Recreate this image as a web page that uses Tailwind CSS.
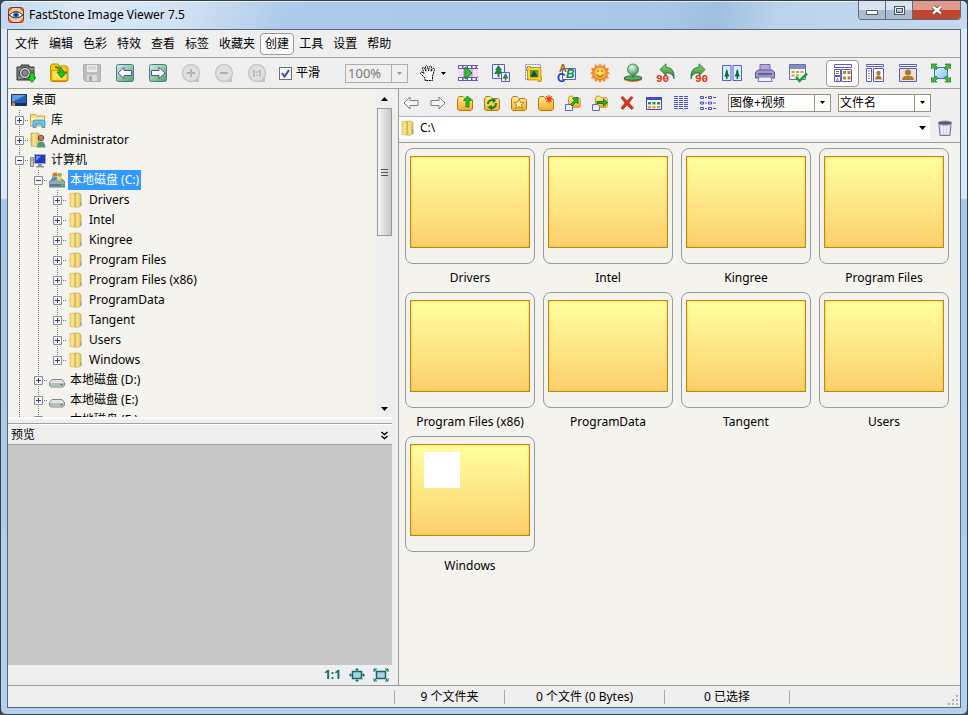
<!DOCTYPE html>
<html lang="zh-CN">
<head>
  <meta charset="UTF-8" />
  <meta name="viewport" content="width=device-width, initial-scale=1.0"/>
  <title>FastStone Image Viewer 7.5</title>

  <!-- Tailwind CSS -->
  <script src="https://cdn.jsdelivr.net/npm/@tailwindcss/browser@4"></script>

  <style>
    body {
      font-family: 'Noto Sans', 'Noto Sans CJK SC', sans-serif;
    }
    .glass {
      background: linear-gradient(to bottom, #c9dcf0 0, #dfeaf6 28px, #dce8f5 197px, #a9c7e6 199px, #b4d0ec 100%);
    }
    .title-glass {
      background: linear-gradient(100deg, #bfd7ef 0, #dbe8f6 8%, #d3e3f4 18%, #adcaea 30%, #a9c8e8 68%, #9fbfe0 74%, #bad2eb 80%, #c6daef 100%);
    }
  </style>
</head>

<body class="h-screen overflow-hidden bg-[#3a4654] text-xs text-black">

  <!-- Gradients (must stay rendered, a hidden svg would drop the fills) -->
  <svg class="absolute size-0" xmlns="http://www.w3.org/2000/svg">
    <defs>
      <linearGradient id="gFolder" x1="0" y1="0" x2="0" y2="1"><stop offset="0" stop-color="#fff0a0"/><stop offset="1" stop-color="#f5a81c"/></linearGradient>
      <linearGradient id="gTree" x1="0" y1="0" x2="1" y2="0"><stop offset="0" stop-color="#dcb950"/><stop offset=".35" stop-color="#f8e79a"/><stop offset="1" stop-color="#dcb950"/></linearGradient>
      <linearGradient id="gGreen" x1="0" y1="0" x2="1" y2="1"><stop offset="0" stop-color="#d8f0dc"/><stop offset="1" stop-color="#4da458"/></linearGradient>
      <linearGradient id="gBlue" x1="0" y1="0" x2="1" y2="1"><stop offset="0" stop-color="#e4f6ff"/><stop offset="1" stop-color="#7fc4ee"/></linearGradient>
      <linearGradient id="gTurn" x1="0" y1="0" x2="0" y2="1"><stop offset="0" stop-color="#8fe05a"/><stop offset="1" stop-color="#1d7d3a"/></linearGradient>
      <radialGradient id="gBall" cx=".4" cy=".3" r=".7"><stop offset="0" stop-color="#e8ffe8"/><stop offset="1" stop-color="#3f9a55"/></radialGradient>
      <radialGradient id="gSun" cx=".5" cy=".4" r=".6"><stop offset="0" stop-color="#fff27a"/><stop offset="1" stop-color="#f7a51e"/></radialGradient>
    </defs>
  </svg>

  <!-- Icons -->
  <svg class="hidden" xmlns="http://www.w3.org/2000/svg">
    <symbol id="app" viewBox="0 0 16 16">
      <rect x=".5" y=".5" width="15" height="15" rx="3" fill="#e8703c" stroke="#8e2d16"/>
      <path d="M1 5 5 1h6l4 4v6l-4 4H5l-4-4z" fill="#f3c9a0"/>
      <path d="M1 8q7-7 14 0-7 6-14 0z" fill="#fff" stroke="#3d2a20"/>
      <circle cx="8" cy="8" r="3" fill="#2b78d0"/><circle cx="8" cy="8" r="1.3" fill="#081b3a"/>
    </symbol>

    <!-- Main toolbar -->
    <symbol id="camera" viewBox="0 0 20 20">
      <path d="M1 4h4V2h8v2h5v13H1z" fill="#777" stroke="#333"/>
      <path d="M2 6h16M2 15h16" stroke="#aaa"/>
      <circle cx="9" cy="10" r="5.5" fill="#ddd" stroke="#333"/><circle cx="9" cy="10" r="3.2" fill="#8a8a92" stroke="#444"/>
      <path d="M14 10h4v4.500h2L16 19.500l-4-5h2z" fill="#1fd81f" stroke="#0a7a0a" stroke-width=".8"/>
    </symbol>
    <symbol id="open" viewBox="0 0 20 20">
      <path d="M1.500 2.500 3 1h6l2 2h6.500L19 5v12l-1.500 1.500h-15l-1-1z" fill="#ffc913" stroke="#c48a00"/>
      <path d="M2.500 7.500h12v3H18v7H3z" fill="#ffe04a" stroke="#d99b00"/>
      <path d="M6 4q8-1 8 5h4l-5.500 6L8 9h3q0-3-5-5z" fill="#22c022" stroke="#0b700b" stroke-width=".8"/>
    </symbol>
    <symbol id="save" viewBox="0 0 20 20">
      <path d="M1.500 1.500h17v17h-15l-2-2z" fill="#bdbdbd" stroke="#b0b0b0"/>
      <path d="M5 2h10v7H5z" fill="#ececec"/><path d="M6 4h8M6 6h8" stroke="#c4c4c4"/>
      <path d="M5 12h10v6H5z" fill="#dcdcdc"/><path d="M7 13h3v5H7z" fill="#aaa"/>
    </symbol>
    <symbol id="prev" viewBox="0 0 20 20">
      <rect x="1.500" y="1.500" width="17" height="17" rx="2" fill="url(#gGreen)" stroke="#4f74a0"/>
      <path d="M3 10 9 4.500v3h7.500v5H9v3z" fill="#fff" stroke="#4a4ac8"/>
    </symbol>
    <symbol id="next" viewBox="0 0 20 20">
      <rect x="1.500" y="1.500" width="17" height="17" rx="2" fill="url(#gGreen)" stroke="#4f74a0"/>
      <path d="M17 10 11 4.500v3H3.500v5H11v3z" fill="#fff" stroke="#4a4ac8"/>
    </symbol>
    <symbol id="zoomin" viewBox="0 0 20 20">
      <path d="M17 12v6h-6z" fill="#cfcfcf" stroke="#c4c4c4" stroke-width="2"/><circle cx="10" cy="10" r="8.500" fill="#e0e0e0" stroke="#c6c6c6" stroke-width="1.500"/>
      <path d="M6 10h8M10 6v8" stroke="#b2b2b2" stroke-width="2"/>
    </symbol>
    <symbol id="zoomout" viewBox="0 0 20 20">
      <path d="M17 12v6h-6z" fill="#cfcfcf" stroke="#c4c4c4" stroke-width="2"/><circle cx="10" cy="10" r="8.500" fill="#e0e0e0" stroke="#c6c6c6" stroke-width="1.500"/>
      <path d="M6 10h8" stroke="#b2b2b2" stroke-width="2"/>
    </symbol>
    <symbol id="actual" viewBox="0 0 20 20">
      <path d="M17 12v6h-6z" fill="#cfcfcf" stroke="#c4c4c4" stroke-width="2"/><circle cx="10" cy="10" r="8.500" fill="#e0e0e0" stroke="#c6c6c6" stroke-width="1.500"/>
      <path d="M7 7v7M13 7v7M5.500 8H7M11.500 8H13M10 8.500V10M10 11.500V13" stroke="#b2b2b2" stroke-width="1.500"/>
    </symbol>
    <symbol id="hand" viewBox="0 0 18 18">
      <path d="M6 16.500V14L1.500 9.500q0-1.500 1.500-1.500l2 1.500L3.500 4q.5-1.500 2 0L7 7.500 6.500 2.500q1-1.500 2 0L9.500 7l1-4.500q1-1 2 0L12 7.500l2-3q1.500-.5 1.500 1L13.500 12v4.500z" fill="#fff" stroke="#000" stroke-linejoin="round" stroke-dasharray="2 .6"/>
    </symbol>
    <symbol id="film" viewBox="0 0 20 20">
      <path d="M0 2h20v16H0z" fill="#5a5ab8"/><path d="M0 6h20v8H0z" fill="#d5a8ee"/><path d="M0 6h5v8H0zM15 6h5v8h-5z" fill="#f7dcf8"/>
      <path d="M1 4h19M1 16h19" stroke="#fff" stroke-width="2" stroke-dasharray="3 1.500"/>
      <path d="M7 4v12l7-6z" fill="#2fce2f" stroke="#0b7c1a"/>
    </symbol>
    <symbol id="resize" viewBox="0 0 20 20">
      <path d="M1.500 1.500h12v14h-12z" fill="#e8f4ff" stroke="#5a5ad0"/>
      <path d="M7.500 2 11 7H9.500l2.500 4H3l2.500-4H4z" fill="#1c8a3c"/><path d="M7.500 11v3" stroke="#8a5a20" stroke-width="2"/>
      <path d="M10.500 9.500h8v9h-8z" fill="#e8f4ff" stroke="#5a5ad0"/><path d="m14.500 10 3 5.500h-6z" fill="#1c8a3c"/><path d="M14.500 15v2.500" stroke="#8a5a20" stroke-width="1.500"/>
    </symbol>
    <symbol id="crop" viewBox="0 0 20 20">
      <path d="M1.500 1.500h15v15h-15z" fill="#e8f4ff" stroke="#8080d8" stroke-dasharray="2 1"/>
      <path d="M6 7h8v7H6z" fill="#4aa878"/><path d="m10 7 4 7H6z" fill="#0d5a28"/>
      <path d="M5 3v12.500h13M2 6h13.500v13" fill="none" stroke="#a87600" stroke-width="3.500"/><path d="M5 3.500v12h12.500M2.500 6h13v12.500" fill="none" stroke="#ffd92a" stroke-width="2"/>
    </symbol>
    <symbol id="abc" viewBox="0 0 20 20">
      <path d="M5.500 5.500h13v11h-13z" fill="#eaf2ff" stroke="#5a5ad0"/>
      <text x="2" y="9" font-family="Liberation Sans" font-size="11" font-weight="bold" fill="#a06a10">A</text>
      <text x="0" y="19" font-family="Liberation Sans" font-size="12" font-weight="bold" fill="#1f3fd8">C</text>
      <text x="9" y="15" font-family="Liberation Sans" font-size="12" font-weight="bold" font-style="italic" fill="#168a2c">B</text>
    </symbol>
    <symbol id="sun" viewBox="0 0 20 20">
      <path d="m10 0 2 3.500L15 1l.5 4L19 5l-1.500 3.500L20 10l-2.500 2L19 15.500h-3.500L15 19l-3-2-2 3-2-3-3 2-.5-3.500H1L2.500 12 0 10l2.500-1.500L1 5l3.500 0L5 1l3 2.500z" fill="#f58a3a"/>
      <circle cx="10" cy="10" r="6.200" fill="url(#gSun)" stroke="#e28412" stroke-width=".8"/>
      <path d="M8 7v2M12 7v2M6.500 11.500q3.500 4 7 0" fill="none" stroke="#8a4a08"/>
    </symbol>
    <symbol id="stamp" viewBox="0 0 20 20">
      <path d="M1 15h18v2q-9 4-18 0z" fill="#e06a1a"/><ellipse cx="10" cy="15" rx="9" ry="2.200" fill="#54b06a" stroke="#1e6c34"/>
      <path d="M9 10h2v5H9z" fill="#3f7f50"/><circle cx="10" cy="6.500" r="5.500" fill="url(#gBall)" stroke="#4d8d5c"/>
    </symbol>
    <symbol id="rotl" viewBox="0 0 20 20">
      <path d="M4 6.500 10 .8v3.500q9 0 8 11.500-1-6-8-6v3z" fill="url(#gTurn)" stroke="#1e6b50" stroke-width=".8"/>
      <text x="0" y="19" font-family="Liberation Mono" font-size="11" font-weight="bold" fill="#e03010">90</text>
    </symbol>
    <symbol id="rotr" viewBox="0 0 20 20">
      <path d="M16 6.500 10 .8v3.500q-9 0-8 11.500 1-6 8-6v3z" fill="url(#gTurn)" stroke="#1e6b50" stroke-width=".8"/>
      <text x="6" y="19" font-family="Liberation Mono" font-size="11" font-weight="bold" fill="#e03010">90</text>
    </symbol>
    <symbol id="compare" viewBox="0 0 20 20">
      <path d="M.5 2.500h8.500v15H.5zM11 2.500h8.500v15H11z" fill="#d4f0fb" stroke="#5a5ad0"/>
      <path d="m4.800 6 1.500 3.500h-.6l1.800 4H2.100l1.800-4h-.6zM15.300 6l1.500 3.500h-.6l1.800 4h-5.400l1.800-4h-.6z" fill="#0f6b34"/><path d="M4.800 13v3M15.300 13v3" stroke="#0f6b34" stroke-width="1.500"/>
    </symbol>
    <symbol id="printer" viewBox="0 0 20 20">
      <path d="M5 1.500h10V9H5z" fill="#b8a8d8" stroke="#7668b0"/>
      <path d="M.5 9 3 7h14l2.500 2v6h-19z" fill="#9e9ad0" stroke="#5c5a9c"/><path d="M3 10h14v2H3z" fill="#6b5c98"/>
      <path d="M4 14h12l1 4.500H3z" fill="#f2f2ff" stroke="#7a78bc"/>
    </symbol>
    <symbol id="batch" viewBox="0 0 20 20">
      <path d="M1.500 1.500h16v15h-16z" fill="#f4f4ff" stroke="#6a6ac0"/><path d="M2 2h15v4H2z" fill="#8292ac"/>
      <path d="M3.500 9h3M8 9h3M12.500 9h3M3.500 12.500h3M8 12.500h3" stroke="#d5a028" stroke-width="2"/>
      <path d="m8 14 3.500 4L19 10.500" fill="none" stroke="#14a024" stroke-width="2.500"/>
    </symbol>
    <symbol id="view1" viewBox="0 0 20 20">
      <path d="M1.500 1.500h17v3h-17zM1.500 6.500h6v6h-6zM1.500 13.500h6v5h-6zM8.500 6.500h10v12h-10z" fill="#fff" stroke="#5a5ac8"/>
      <path d="M3 8.500h3M3 10.500h3M3 17h3M4 15.500h1" stroke="#8f7040"/><path d="M10 8h3v3h-3zM14.500 8h3v3h-3zM10 13.500h3v3h-3zM14.500 13.500h3v3h-3z" fill="#b88420"/>
    </symbol>
    <symbol id="view2" viewBox="0 0 20 20">
      <path d="M1.500 1.500h17v2h-17zM1.500 5.500h5v13h-5zM8.500 5.500h10v13h-10z" fill="#fff" stroke="#5a5ac8"/>
      <path d="M3 8h2M3 10.500h2M3 13h2M3 15.500h2" stroke="#b88420"/><circle cx="13.500" cy="10" r="2.200" fill="#a87a30"/><path d="M9.500 16.500 12 12.500h3l2.500 4z" fill="#a87a30"/>
    </symbol>
    <symbol id="view3" viewBox="0 0 20 20">
      <path d="M1.500 1.500h17v2h-17zM1.500 5.500h17v13h-17z" fill="#fff" stroke="#5a5ac8"/><path d="M2 6h16v12H2z" fill="#efe4ca"/>
      <circle cx="10" cy="9.500" r="3" fill="#a87a30"/><path d="M4 17q.5-4 4-4h4q3.500 0 4 4z" fill="#a87a30"/>
    </symbol>
    <symbol id="full" viewBox="0 0 20 20">
      <path d="M3.500 4.500h13v11h-13z" fill="url(#gBlue)" stroke="#4a6ad0"/>
      <path d="M0 1h6L4.500 2.500 7 5 5 7 2 4.500.5 6zM20 1h-6l1.500 1.500L13 5l2 2 3-2.500L19.500 6zM0 19h6l-1.500-1.500L7 15l-2-2-3 2.500L.5 14zM20 19h-6l1.500-1.500L13 15l2-2 3 2.500 1.500-1.500z" fill="#3fb83f" stroke="#157a20" stroke-width=".7"/>
    </symbol>

    <!-- Browser toolbar -->
    <symbol id="back" viewBox="0 0 16 16"><path d="M1 8 7 2v3.500h8v5H7V14z" fill="#f4f4f4" stroke="#808080"/></symbol>
    <symbol id="forward" viewBox="0 0 16 16"><path d="M15 8 9 2v3.500H1v5h8V14z" fill="#f4f4f4" stroke="#808080"/></symbol>
    <symbol id="base" viewBox="0 0 16 16"><path d="M.5 4 2 1.500h4L8 3.500h6L15.500 5v9L14 15.500H2L.5 14z" fill="url(#gFolder)" stroke="#b87a08"/></symbol>
    <symbol id="up" viewBox="0 0 16 16"><use href="#base"/><path d="M10.500 1 14.500 5.500h-2.500V12H9V5.500H6.500z" fill="#20c820" stroke="#0a7a14" stroke-width=".8"/></symbol>
    <symbol id="refresh" viewBox="0 0 16 16"><use href="#base"/><path d="M4 9q0-4 5-4M12 8q0 5-5 5" fill="none" stroke="#0f8a20" stroke-width="2"/><path d="m8 3 4.500 2L9 8.500zM8 10v5.500L3.500 12z" fill="#0f8a20"/></symbol>
    <symbol id="star" viewBox="0 0 16 16"><use href="#base"/><path d="m8 4 1.500 3.300 3.500.2-2.700 2.300 1 3.700L8 11.500l-3.300 2 1-3.700L3 7.500l3.500-.2z" fill="#fff6a8" stroke="#a87408" stroke-width=".8"/></symbol>
    <symbol id="new" viewBox="0 0 16 16"><use href="#base"/><path d="M11 0v8M7 4h8M8.200 1.200l5.600 5.600M13.800 1.200 8.200 6.800" stroke="#f03818" stroke-width="1.200"/></symbol>
    <symbol id="copy" viewBox="0 0 16 16"><g transform="translate(3 0) scale(.8)"><use href="#base" width="16" height="16"/></g><path d="M.5 9.500h5l2 2v4h-7z" fill="#eef0ff" stroke="#6464b8"/><path d="M13 2.500v6L11 7l-4 4-1.500-1.500 4-4L7.500 3z" fill="#20c020" stroke="#06600e" stroke-width=".8"/></symbol>
    <symbol id="move" viewBox="0 0 16 16"><g transform="translate(3 0) scale(.8)"><use href="#base" width="16" height="16"/></g><path d="M.5 9.500h5l2 2v4h-7z" fill="#eef0ff" stroke="#6464b8"/><path d="M15.500 7.500 11.500 11V8.500H5v-2h6.500V4z" fill="#20c020" stroke="#06600e" stroke-width=".8"/></symbol>
    <symbol id="del" viewBox="0 0 16 16"><path d="M2 2.500 4 1.500l4 4.500 4-4.500 2 1L10 8l4.500 5-2 1.500L8 10l-4 4.500L2 13l4-5z" fill="#dc3418" stroke="#a82008" stroke-width=".6"/></symbol>
    <symbol id="thumbs" viewBox="0 0 16 16"><path d="M.5 2.500h15v12H.5z" fill="#fff" stroke="#4848c0"/><path d="M0 2h16v3H0z" fill="#4848c8"/><path d="M2 7h3v2.500H2zM6.500 7h3v2.500h-3zM11 7h3v2.500h-3z" fill="#1a9a22"/><path d="M2 11h3v2.500H2zM6.500 11h3v2.500h-3zM11 11h3v2.500h-3z" fill="#f59040"/></symbol>
    <symbol id="details" viewBox="0 0 16 16"><path d="M1 1.500h14M1 3.500h14M1 5.500h14M1 7.500h14M1 9.500h14M1 11.500h14M1 13.500h14" stroke="#4c4cc4" stroke-dasharray="4 1"/></symbol>
    <symbol id="list" viewBox="0 0 16 16"><path d="M.5 1.500h3v2h-3zM8.500 1.500h3v2h-3zM.5 7h3v2h-3zM8.500 7h3v2h-3zM.5 12.500h3v2h-3zM8.500 12.500h3v2h-3z" fill="none" stroke="#4c4cc4"/><path d="M5 2.500h2M13 2.500h3M5 8h2M13 8h3M5 13.500h2M13 13.500h3" stroke="#4c4cc4"/></symbol>
    <symbol id="bin" viewBox="0 0 16 16"><path d="M2 4h12l-1 11.500H3z" fill="#d4d0ee" stroke="#7772a8"/><path d="M5 6v8M8 6v8M11 6v8" stroke="#f6f4ff" stroke-width="1.500"/><ellipse cx="8" cy="3" rx="7" ry="2" fill="#5a5668" stroke="#9a96bc"/></symbol>

    <!-- Tree -->
    <symbol id="node" viewBox="0 0 19 20"><path d="M9.500 0v20M15 10.500h5" stroke="#777" stroke-dasharray="1 1"/><path d="M5.500 6.500h8v8h-8z" fill="#f8f8f8" stroke="#8c8c8c"/><path d="M7 10.500h5M9.500 8v5" stroke="#2a3f90"/></symbol>
    <symbol id="open-node" viewBox="0 0 19 20"><path d="M9.500 0v20M15 10.500h5" stroke="#777" stroke-dasharray="1 1"/><path d="M5.500 6.500h8v8h-8z" fill="#f8f8f8" stroke="#8c8c8c"/><path d="M7 10.500h5" stroke="#2a3f90"/></symbol>
    <symbol id="last-node" viewBox="0 0 19 20"><path d="M9.500 0v10M15 10.500h5" stroke="#777" stroke-dasharray="1 1"/><path d="M5.500 6.500h8v8h-8z" fill="#f8f8f8" stroke="#8c8c8c"/><path d="M7 10.500h5M9.500 8v5" stroke="#2a3f90"/></symbol>
    <symbol id="line" viewBox="0 0 19 20"><path d="M9.500 0v20" stroke="#777" stroke-dasharray="1 1"/></symbol>
    <symbol id="desktop" viewBox="0 0 16 16"><path d="M.5 2.500h15v11H.5z" fill="#2362b8" stroke="#23344c"/><path d="M1 3h14L1 10z" fill="#5fa0e4"/><path d="M1 12h14" stroke="#16305c" stroke-width="2"/><circle cx="2.500" cy="12.500" r="1.800" fill="#f08028"/></symbol>
    <symbol id="library" viewBox="0 0 16 16"><path d="M.5 2.500h5l1 1.500h8v10H.5z" fill="#f5df88" stroke="#c8a848"/><path d="M1 7h13" stroke="#fff6c8" stroke-width="2"/><path d="M3 15.500V10q0-2 2-2h8q2 0 2 2v5.500h-3V12H6v3.500z" fill="#6cc4ec" stroke="#3090c4" stroke-width=".8"/></symbol>
    <symbol id="user" viewBox="0 0 16 16"><path d="M1 1h8v14l-8-1z" fill="url(#gTree)" stroke="#bb9a3c" stroke-width=".6"/><circle cx="11" cy="6" r="2.800" fill="#b88058" stroke="#50382a" stroke-width=".8"/><path d="M7 15.500q0-6 4-6t4.500 6z" fill="#4d9a7c"/></symbol>
    <symbol id="computer" viewBox="0 0 16 16"><path d="M4.500 2.500h11v9h-11z" fill="#2338c0" stroke="#a0a8b0"/><path d="M6 4h5l-5 5z" fill="#6a90f0"/><path d="M8 12h4v2H8zM6 14h8v1.500H6z" fill="#8c949c"/><path d="M.5 5.500h3v9h-3z" fill="#c8ccd0" stroke="#888"/><path d="M1 8h2" stroke="#28b828"/></symbol>
    <symbol id="sysdrive" viewBox="0 0 16 16"><path d="M0 10 3 7h10l3 3v5H0z" fill="#98a8b0" stroke="#5c6a72" stroke-width=".8"/><path d="M1 12h14v2.500H1z" fill="#4f8090"/><path d="M12 12.500h2.500v1.500H12z" fill="#4ce04c"/><path d="m4 1 4-.5V4L3 5z" fill="#f06428"/><path d="m9 .8 4 .8-1 3.400-4-1z" fill="#7cc040"/><path d="m3 5.500 5-1V8L2 9z" fill="#3f90e0"/><path d="m8.500 5 4 1-1 3-4-1z" fill="#ffd030"/></symbol>
    <symbol id="drive" viewBox="0 0 16 16"><path d="M.5 10.500 3 7.500h10l2.500 3v3L14 15H2L.5 13.500z" fill="#e4e4e6" stroke="#808488"/><path d="M1 11h14v2.500l-1 1H2l-1-1z" fill="#b8bcc0"/><path d="M11.500 12h2v1.500h-2z" fill="#20a020"/></symbol>
    <symbol id="folder" viewBox="0 0 16 16"><path d="M2 1.500 7 1v14l-5-.5z" fill="#f6e283" stroke="#cdb050" stroke-width=".6"/><path d="M7 1h4l2 1.500V14l-4 1.500L7 15z" fill="url(#gTree)" stroke="#c4a23c" stroke-width=".6"/><path d="M13 10v3.500" stroke="#62a8dc"/></symbol>

    <!-- Small -->
    <symbol id="down" viewBox="0 0 7 4"><path d="M0 0h7L3.500 4z"/></symbol>
    <symbol id="upper" viewBox="0 0 7 4"><path d="M0 4h7L3.500 0z"/></symbol>
    <symbol id="chevrons" viewBox="0 0 7 9"><path d="m.5 1 3 2.500 3-2.500M.5 5l3 2.500 3-2.500" fill="none" stroke="#000" stroke-width="1.400"/></symbol>
    <symbol id="fit" viewBox="0 0 16 14"><path d="M3.500 3.500h9v7h-9z" fill="#a8d0e0" stroke="#0f6a6a" stroke-width="1.500"/><path d="M8 0v3M8 11v3M0 7h3M13 7h3M6.500 1.500h3M6.500 12.500h3M1.500 5.500v3M14.500 5.500v3" stroke="#0f6a6a"/></symbol>
    <symbol id="fitall" viewBox="0 0 16 14"><path d="M3.500 3.500h9v7h-9z" fill="#a8d0e0" stroke="#0f6a6a" stroke-width="1.500"/><path d="M1 4V1h3M12 1h3v3M15 10v3h-3M4 13H1v-3M1 1l2 2M15 1l-2 2M1 13l2-2M15 13l-2-2" fill="none" stroke="#0f6a6a"/></symbol>
  </svg>

  <div class="glass flex h-screen flex-col rounded-t-md rounded-b-md border border-[#33404e] px-[6px] pb-[6px]">

    <!-- Title bar -->
    <header class="title-glass -mx-[6px] flex h-7 shrink-0 items-start rounded-t-md border-t border-white/70 px-[6px]">
      <svg class="mt-[5px] ml-px size-4"><use href="#app"/></svg>
      <h1 class="mt-1 ml-[5px] grow leading-[18px]">FastStone Image Viewer 7.5</h1>
      <div class="-mt-px flex h-[19px] overflow-hidden rounded-b border border-t-0 border-[#5b6b7d]">
        <button aria-label="最小化" class="flex w-[27px] items-center justify-center border-r border-[#5b6b7d] bg-gradient-to-b from-[#d9e4f0] from-50% to-[#a9bed4] to-50%"><svg class="mt-1 h-[5px] w-3"><path d="M.5.5h11v4H.5z" fill="#fff" stroke="#4d5560"/></svg></button>
        <button aria-label="最大化" class="flex w-[27px] items-center justify-center border-r border-[#5b6b7d] bg-gradient-to-b from-[#d9e4f0] from-50% to-[#a9bed4] to-50%"><svg class="h-[9px] w-[11px]"><path d="M1.500 1.500h8v6h-8z" fill="none" stroke="#4d5560" stroke-width="3"/><path d="M1.500 1.500h8v6h-8z" fill="none" stroke="#fff"/></svg></button>
        <button aria-label="关闭" class="flex w-[47px] items-center justify-center bg-gradient-to-b from-[#e0998c] from-50% to-[#c04530] to-50%"><svg class="h-[10px] w-3"><path d="m2 1.500 8 7M10 1.500l-8 7" stroke="#5c3434" stroke-width="4"/><path d="m2 1.500 8 7M10 1.500l-8 7" stroke="#fff" stroke-width="2.500"/></svg></button>
      </div>
    </header>

    <div class="flex min-h-0 grow flex-col border border-[#566778] bg-[#efefef]">

      <!-- Menu -->
      <nav class="flex h-7 shrink-0 items-center border-b border-[#a5a293] px-[2px]">
        <button class="h-[22px] px-[5px]">文件</button>
        <button class="h-[22px] px-[5px]">编辑</button>
        <button class="h-[22px] px-[5px]">色彩</button>
        <button class="h-[22px] px-[5px]">特效</button>
        <button class="h-[22px] px-[5px]">查看</button>
        <button class="h-[22px] px-[5px]">标签</button>
        <button class="h-[22px] px-[5px]">收藏夹</button>
        <button class="h-[22px] rounded border border-[#999] bg-[#fafafa] px-1">创建</button>
        <button class="h-[22px] px-[5px]">工具</button>
        <button class="h-[22px] px-[5px]">设置</button>
        <button class="h-[22px] px-[5px]">帮助</button>
      </nav>

      <!-- Main toolbar -->
      <div class="flex h-[31px] shrink-0 items-center border-b border-[#a5a293] pl-px">
        <div class="flex" data-icons="camera open save prev next zoomin zoomout actual"></div>
        <label class="ml-[6px] flex items-center gap-1">
          <span class="relative flex">
            <input type="checkbox" checked class="size-[13px] appearance-none border border-[#707070] bg-[#f6f6f6]">
            <svg class="pointer-events-none absolute inset-0 size-[13px]"><path d="m3 6 2.500 3.500L10 3" fill="none" stroke="#33509c" stroke-width="2"/></svg>
          </span>
          平滑
        </label>
        <div class="ml-[25px] flex h-[19px] w-[63px] border border-[#adadad] text-[#777]">
          <select aria-label="缩放" class="min-w-0 grow appearance-none bg-transparent pl-[2px] text-[13px] leading-[17px]"><option>100%</option></select>
          <span class="pointer-events-none flex w-4 items-center justify-center border-l border-[#adadad]"><svg class="h-[3px] w-[5px] fill-[#999]"><use href="#down"/></svg></span>
        </div>
        <button aria-label="手形工具" class="ml-1 flex w-[39px] items-center justify-center gap-1 pl-[2px]">
          <svg class="size-[18px]"><use href="#hand"/></svg><svg class="h-[3px] w-[5px]"><use href="#down"/></svg>
        </button>
        <div class="flex" data-icons="film resize crop abc sun stamp rotl rotr compare printer batch"></div>
        <button aria-label="浏览布局" class="ml-3 flex h-[27px] w-[33px] items-center justify-center rounded border border-[#999] bg-white"><svg class="size-5"><use href="#view1"/></svg></button>
        <div class="-ml-px flex" data-icons="view2 view3 full"></div>
      </div>

      <main class="flex min-h-0 grow">

        <!-- Left side -->
        <aside class="flex w-[391px] shrink-0 flex-col border-r border-[#9a9a9a] pr-[6px]">
          <div class="flex min-h-0 grow border-b-2 border-white bg-[#f4f3ee]">
            <ul id="tree" class="min-w-0 grow overflow-hidden pt-px pl-[2px]"></ul>
            <div class="flex w-4 flex-col items-center bg-[#eeeef0]">
              <button aria-label="向上滚动" class="flex h-[19px] w-full items-center justify-center"><svg class="h-1 w-[7px]"><use href="#upper"/></svg></button>
              <div class="flex h-[128px] w-[15px] items-center justify-center border border-[#999] bg-gradient-to-r from-[#f6f6f6] to-[#c6c6cc]">
                <svg class="h-[9px] w-[7px]"><path d="M0 1.500h7M0 4.500h7M0 7.500h7" stroke="#555"/></svg>
              </div>
              <button aria-label="向下滚动" class="mt-auto flex h-[17px] w-full items-center justify-center"><svg class="h-1 w-[7px]"><use href="#down"/></svg></button>
            </div>
          </div>

          <!-- Preview -->
          <section class="mt-1 flex h-[262px] shrink-0 flex-col border-t border-[#a0a0a0]">
            <h2 class="flex h-5 shrink-0 items-center justify-between border-t border-white px-[3px] pt-px pr-1">预览
              <button aria-label="折叠"><svg class="h-[9px] w-[7px]"><use href="#chevrons"/></svg></button>
            </h2>
            <div class="grow border-t border-[#a0a0a0] bg-[#c8c8c8]"></div>
            <div class="flex h-5 items-center justify-end gap-2 pr-[3px]">
              <button class="font-bold text-[#0f6a6a]">1:1</button>
              <button aria-label="适应"><svg class="h-[14px] w-4"><use href="#fit"/></svg></button>
              <button aria-label="适应窗口"><svg class="h-[14px] w-4"><use href="#fitall"/></svg></button>
            </div>
          </section>
        </aside>

        <!-- Browser -->
        <section class="flex min-w-0 grow flex-col">
          <div class="flex h-[27px] shrink-0 items-center">
            <div class="-ml-[2px] flex" data-small="back forward up refresh star new copy move del thumbs details list"></div>
            <div class="ml-[7px] flex h-[18px] w-[103px] border border-[#98937e] bg-white">
              <select aria-label="类型" class="min-w-0 grow appearance-none pl-px leading-4"><option>图像+视频</option></select>
              <span class="pointer-events-none flex w-4 items-center justify-center border-l border-[#98937e]"><svg class="h-[3px] w-[5px]"><use href="#down"/></svg></span>
            </div>
            <div class="ml-[7px] flex h-[18px] w-[93px] border border-[#98937e] bg-white">
              <select aria-label="排序" class="min-w-0 grow appearance-none pl-px leading-4"><option>文件名</option></select>
              <span class="pointer-events-none flex w-4 items-center justify-center border-l border-[#98937e]"><svg class="h-[3px] w-[5px]"><use href="#down"/></svg></span>
            </div>
          </div>
          <div class="flex h-[26px] shrink-0 items-center pb-[3px]">
            <label class="flex h-[23px] grow items-center border-t border-[#b0b4c0] bg-white pr-1 pl-px">
              <svg class="size-4"><use href="#folder"/></svg>
              <input type="text" value="C:\" aria-label="路径" class="ml-1 min-w-0 grow">
              <svg class="h-1 w-[7px]"><use href="#down"/></svg>
            </label>
            <button aria-label="回收站" class="flex w-[30px] justify-center"><svg class="size-4"><use href="#bin"/></svg></button>
          </div>
          <ul id="folders" class="flex min-h-0 grow flex-wrap content-start gap-x-2 overflow-hidden border-t border-[#9a9a9a] bg-[#f4f3ee] pt-[5px] pl-[6px]"></ul>
        </section>
      </main>

      <!-- Status bar -->
      <footer class="flex h-[22px] shrink-0 items-center border-t border-[#999] text-center leading-[14px]">
        <span class="h-[14px] w-[387px] border-r border-[#aca899]"></span>
        <span class="h-[14px] w-[110px] border-r border-[#aca899]">9 个文件夹</span>
        <span class="h-[14px] w-[160px] border-r border-[#aca899]">0 个文件 (0 Bytes)</span>
        <span class="h-[14px] w-[125px] border-r border-[#aca899]">0 已选择</span>
        <svg class="mt-auto mr-[2px] mb-[2px] ml-auto size-[10px]"><path d="M8 0h2v2H8zM4 4h2v2H4zM8 4h2v2H8zM0 8h2v2H0zM4 8h2v2H4zM8 8h2v2H8z" fill="#b0b0b0"/></svg>
      </footer>
    </div>
  </div>

  <!-- JavaScript -->
  <script>
    const folders = ['Drivers', 'Intel', 'Kingree', 'Program Files', 'Program Files (x86)', 'ProgramData', 'Tangent', 'Users', 'Windows'];

    // [label, icon, connector cells from left to right]
    const tree = [
      ['桌面', 'desktop', []],
      ['库', 'library', ['node']],
      ['Administrator', 'user', ['node']],
      ['计算机', 'computer', ['open-node']],
      ['本地磁盘 (C:)', 'sysdrive', ['line', 'open-node']],
      ...folders.map((name, i) => [name, 'folder', ['line', 'line', i === folders.length - 1 ? 'last-node' : 'node']]),
      ['本地磁盘 (D:)', 'drive', ['line', 'node']],
      ['本地磁盘 (E:)', 'drive', ['line', 'node']],
      ['本地磁盘 (F:)', 'drive', ['line', 'node']]
    ];

    function renderToolbars() {
      document.querySelectorAll('[data-icons]').forEach(bar => {
        bar.innerHTML = bar.dataset.icons.split(' ').map(id =>
          `<button aria-label="${id}" class="flex h-6 w-[33px] items-center justify-center"><svg class="size-5"><use href="#${id}"/></svg></button>`).join('');
      });
      document.querySelectorAll('[data-small]').forEach(bar => {
        bar.innerHTML = bar.dataset.small.split(' ').map(id =>
          `<button aria-label="${id}" class="flex h-5 w-[27px] items-center justify-center"><svg class="size-4"><use href="#${id}"/></svg></button>`).join('');
      });
    }

    function renderTree() {
      document.getElementById('tree').innerHTML = tree.map(([label, icon, cells]) => {
        const selected = icon === 'sysdrive' ? 'bg-[#3399ff] text-white' : '';
        const lines = cells.map(c => `<svg class="h-5 w-[19px] shrink-0"><use href="#${c}"/></svg>`).join('');
        return `<li class="flex h-5 items-center whitespace-nowrap">${lines}<svg class="mr-[3px] ml-px size-4 shrink-0"><use href="#${icon}"/></svg><span class="px-[2px] leading-5 ${selected}">${label}</span></li>`;
      }).join('');
    }

    function renderFolders() {
      document.getElementById('folders').innerHTML = folders.map(name => `
        <li class="h-36 w-[130px] text-center">
          <div class="h-[116px] rounded-lg border border-[#999] px-1 pt-[7px]">
            <div class="h-[92px] border border-[#c08a08] bg-gradient-to-b from-[#ffff9f] to-[#fccf6c] pt-[7px] pl-[13px] shadow-[inset_0_0_2px_#e8a820]">
              ${name === 'Windows' ? '<div class="size-9 bg-white"></div>' : ''}
            </div>
          </div>
          <p class="leading-7">${name}</p>
        </li>`).join('');
    }

    renderToolbars();
    renderTree();
    renderFolders();
  </script>

</body>
</html>
